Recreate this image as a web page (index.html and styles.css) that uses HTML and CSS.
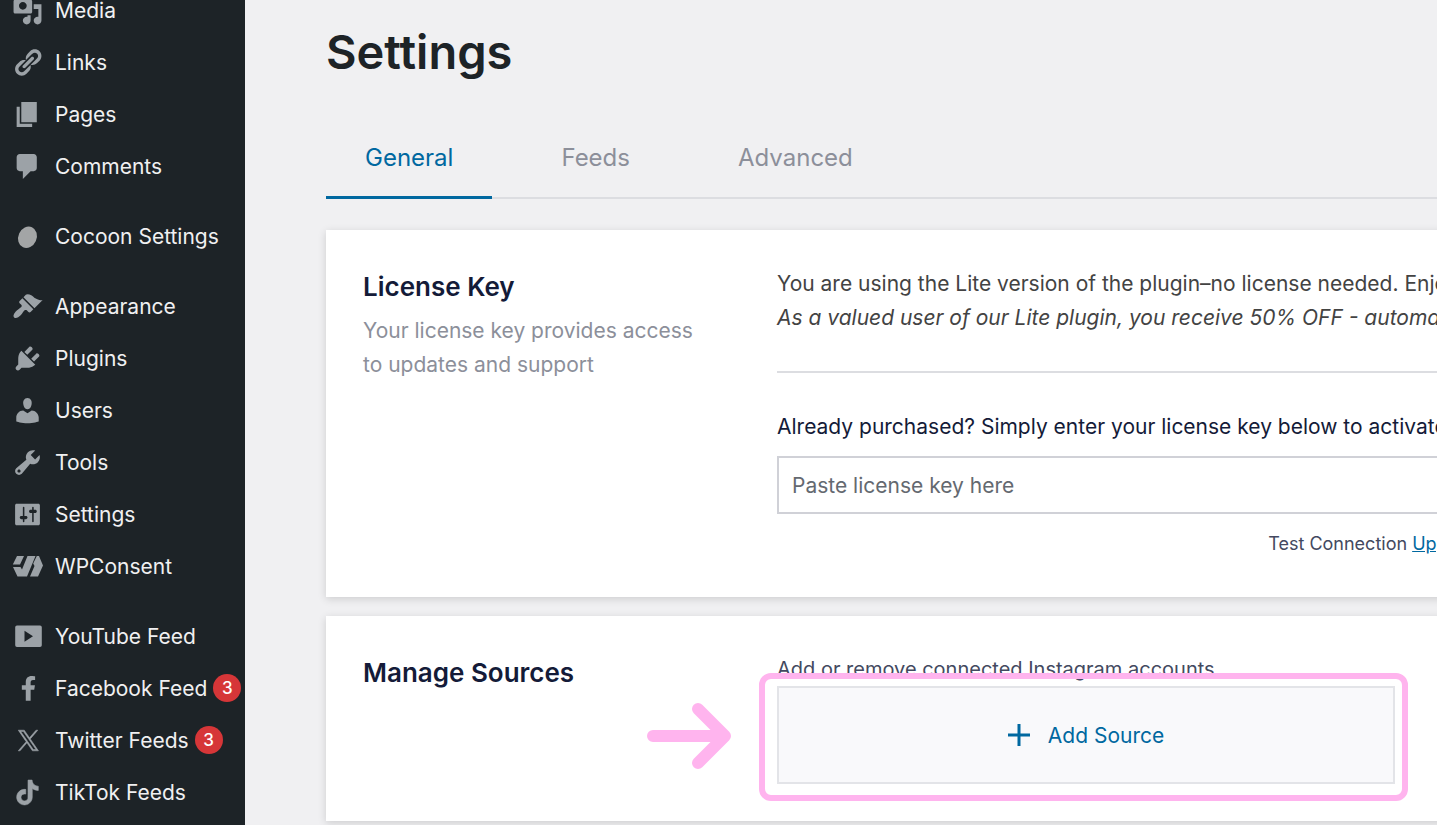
FILE: index.html
```html
<!DOCTYPE html>
<html lang="en">
<head>
    <meta charset="UTF-8">
    <meta name="viewport" content="width=device-width, initial-scale=1.0">
    <title>Settings</title>
    <link rel="stylesheet" href="styles.css">
</head>
<body>
    <nav class="sidebar">
        <ul class="menu">
            <li><a href="#">
                <svg class="icon" viewBox="0 0 20 20"><path d="M13 11V4c0-.55-.45-1-1-1h-1.67L9 1H5L3.67 3H2c-.55 0-1 .45-1 1v7c0 .55.45 1 1 1h10c.55 0 1-.45 1-1zM7 4.5c1.38 0 2.5 1.12 2.5 2.5S8.38 9.5 7 9.5 4.5 8.38 4.5 7 5.62 4.5 7 4.5zM14 6h5v10.5c0 1.38-1.12 2.5-2.5 2.5S14 17.88 14 16.5s1.12-2.5 2.5-2.5c.17 0 .34.02.5.05V9h-3V6zm-4 8.05V13h2v3.5c0 1.38-1.12 2.5-2.5 2.5S7 17.88 7 16.5 8.12 14 9.5 14c.17 0 .34.02.5.05z"/></svg>
                Media</a></li>
            <li><a href="#">
                <svg class="icon" viewBox="0 0 20 20"><path d="M17.74 2.76c1.68 1.69 1.68 4.41 0 6.1l-1.53 1.52c-1.12 1.12-2.7 1.47-4.14 1.09l2.62-2.61.76-.77.76-.76c.84-.84.84-2.2 0-3.04-.84-.85-2.2-.85-3.04 0l-.77.76-3.38 3.38c-.37-1.44-.02-3.02 1.1-4.14l1.52-1.53c1.69-1.68 4.42-1.68 6.1 0zM8.59 13.43l5.34-5.34c.42-.42.42-1.1 0-1.52-.44-.43-1.13-.39-1.53 0l-5.33 5.34c-.42.42-.42 1.1 0 1.52.44.43 1.13.39 1.52 0zm-.76 2.29l4.14-4.15c.38 1.44.03 3.02-1.09 4.14l-1.52 1.53c-1.69 1.68-4.41 1.68-6.1 0-1.68-1.68-1.68-4.42 0-6.1l1.53-1.52c1.12-1.12 2.7-1.47 4.14-1.1l-4.14 4.15c-.85.84-.85 2.2 0 3.05.84.84 2.2.84 3.04 0z"/></svg>
                Links</a></li>
            <li><a href="#">
                <svg class="icon" viewBox="0 0 20 20"><path d="M6 15V2h10v13H6zm-1 1h8v2H3V5h2v11z"/></svg>
                Pages</a></li>
            <li><a href="#">
                <svg class="icon" viewBox="0 0 20 20"><path d="M5 2h9c1.1 0 2 .9 2 2v7c0 1.1-.9 2-2 2h-2l-5 5v-5H5c-1.1 0-2-.9-2-2V4c0-1.1.9-2 2-2z"/></svg>
                Comments</a></li>
            <li class="group"><a href="#">
                <svg class="icon" viewBox="0 0 20 20"><ellipse cx="10" cy="10.5" rx="5.900" ry="7.100" transform="rotate(24 10 10.5)" fill="#a3a5a6"/></svg>
                Cocoon Settings</a></li>
            <li class="group"><a href="#">
                <svg class="icon" viewBox="0 0 20 20"><path d="M14.48 11.06L7.41 3.99l1.5-1.5c.5-.56 2.3-.47 3.51.32 1.21.8 1.43 1.28 2.91 2.1 1.18.64 2.45 1.26 4.45.85zm-.71.71L6.7 4.7 4.93 6.47c-.39.39-.39 1.02 0 1.41l1.06 1.06c.39.39.39 1.03 0 1.42-.6.6-1.43 1.11-2.21 1.69-.35.26-.7.53-1.01.84C1.43 14.23.4 16.08 1.4 17.07c.99 1 2.84-.03 4.18-1.36.31-.31.58-.66.85-1.02.57-.78 1.08-1.61 1.69-2.21.39-.39 1.02-.39 1.41 0l1.06 1.06c.39.39 1.02.39 1.41 0z"/></svg>
                Appearance</a></li>
            <li><a href="#">
                <svg class="icon" viewBox="0 0 20 20"><path d="M13.11 4.36L9.87 7.6 8 5.73l3.24-3.24c.35-.34 1.05-.2 1.56.32.52.51.66 1.21.31 1.55zm-8 1.77l.91-1.12 9.01 9.01-1.19.84c-.71.71-2.63 1.16-3.82 1.16H6.14L4.9 17.26c-.59.59-1.54.59-2.12 0-.59-.58-.59-1.53 0-2.12l1.24-1.24v-3.88c0-1.13.4-3.19 1.09-3.89zm7.26 3.97l3.24-3.24c.34-.35 1.04-.21 1.55.31.52.51.66 1.21.31 1.55l-3.24 3.25z"/></svg>
                Plugins</a></li>
            <li><a href="#">
                <svg class="icon" viewBox="0 0 20 20"><path d="M10 9.25c-2.27 0-2.73-3.44-2.73-3.44C7 4.02 7.82 2 9.97 2c2.16 0 2.98 2.02 2.71 3.81 0 0-.41 3.44-2.68 3.44zm0 2.57L12.72 10c2.39 0 4.52 2.33 4.52 4.53v2.49s-3.65 1.13-7.24 1.13c-3.65 0-7.24-1.13-7.24-1.13v-2.49c0-2.25 1.94-4.48 4.47-4.48z"/></svg>
                Users</a></li>
            <li><a href="#">
                <svg class="icon" viewBox="0 0 20 20"><path d="M16.68 9.77c-1.34 1.34-3.3 1.67-4.95.99l-5.41 6.52c-.99.99-2.59.99-3.58 0s-.99-2.59 0-3.57l6.52-5.42c-.68-1.65-.35-3.61.99-4.95 1.28-1.28 3.12-1.62 4.72-1.06l-2.89 2.89 2.82 2.82 2.86-2.87c.53 1.58.18 3.39-1.08 4.65zM3.81 16.21c.4.39 1.04.39 1.43 0 .4-.4.4-1.04 0-1.43-.39-.4-1.03-.4-1.43 0-.39.39-.39 1.03 0 1.43z"/></svg>
                Tools</a></li>
            <li><a href="#">
                <svg class="icon" viewBox="0 0 20 20"><path d="M18 16V4c0-.55-.45-1-1-1H3c-.55 0-1 .45-1 1v12c0 .55.45 1 1 1h14c.55 0 1-.45 1-1zM8 11h1c.55 0 1 .45 1 1s-.45 1-1 1H8v1.5c0 .28-.22.5-.5.5s-.5-.22-.5-.5V13H6c-.55 0-1-.45-1-1s.45-1 1-1h1V5.5c0-.28.22-.5.5-.5s.5.22.5.5V11zm5-2h-1c-.55 0-1-.45-1-1s.45-1 1-1h1V5.5c0-.28.22-.5.5-.5s.5.22.5.5V7h1c.55 0 1 .45 1 1s-.45 1-1 1h-1v5.5c0 .28-.22.5-.5.5s-.5-.22-.5-.5V9z"/></svg>
                Settings</a></li>
            <li><a href="#">
                <svg class="icon" viewBox="0 0 31 31"><path d="M5 5h7l-4 8.500H.8zM15.500 5h8L15 25.500H5.500L1 16h7.500l1.500 2.500zM24.800 5h2.200l4 9.500-5 11h-8l4.500-10.500-1.300-2.500z"/></svg>
                WPConsent</a></li>
            <li class="group"><a href="#">
                <svg class="icon" viewBox="0 0 31 31"><path fill-rule="evenodd" d="M5 4.500h23a1.800 1.800 0 0 1 1.800 1.800v18a1.800 1.800 0 0 1-1.800 1.800H5a1.800 1.800 0 0 1-1.800-1.800v-18A1.800 1.800 0 0 1 5 4.500zM12.500 9.800v11l8.500-5.500z"/></svg>
                YouTube Feed</a></li>
            <li><a href="#">
                <svg class="icon" viewBox="-180 -60 640 640"><path d="M279.140 288l14.220-92.660h-88.910v-60.130c0-25.350 12.420-50.060 52.240-50.060h40.420V6.260S260.430 0 225.360 0c-73.220 0-121.080 44.380-121.080 124.720v70.620H22.890V288h81.390v224h100.170V288z"/></svg>
                Facebook Feed <span class="badge">3</span></a></li>
            <li><a href="#">
                <svg class="icon" viewBox="-7 -6 36 36"><path stroke="#9ca2a7" stroke-width=".6" d="M14.234 10.162 22.977 0h-2.072l-7.591 8.824L7.251 0H.258l9.168 13.343L.258 24H2.330l8.016-9.318L16.749 24h6.993zm-2.837 3.299-.929-1.329L3.076 1.560h3.182l5.965 8.532.929 1.329 7.754 11.090h-3.182z"/></svg>
                Twitter Feeds <span class="badge">3</span></a></li>
            <li><a href="#">
                <svg class="icon" viewBox="-3 -3 30 30"><path stroke="#9ca2a7" stroke-width=".6" d="M12.525.020c1.310-.020 2.610-.010 3.910-.020.080 1.530.630 3.090 1.750 4.170 1.120 1.110 2.700 1.620 4.240 1.790v4.030c-1.440-.050-2.890-.350-4.200-.970-.570-.260-1.100-.590-1.620-.930-.010 2.920.010 5.840-.020 8.750-.080 1.400-.540 2.790-1.350 3.940-1.310 1.920-3.580 3.170-5.910 3.210-1.430.080-2.860-.310-4.080-1.030-2.020-1.190-3.440-3.370-3.650-5.710-.020-.500-.030-1-.010-1.490.180-1.900 1.120-3.720 2.580-4.960 1.660-1.440 3.980-2.130 6.150-1.720.020 1.480-.040 2.960-.040 4.440-.990-.320-2.150-.230-3.020.370-.630.410-1.110 1.040-1.360 1.750-.210.510-.150 1.070-.140 1.610.240 1.640 1.820 3.020 3.500 2.870 1.120-.010 2.190-.660 2.770-1.610.190-.330.400-.670.410-1.060.100-1.790.060-3.570.070-5.360.010-4.030-.010-8.050.020-12.070z"/></svg>
                TikTok Feeds</a></li>
        </ul>
    </nav>

    <main class="content">
        <h1>Settings</h1>

        <div class="tabs">
            <a class="tab active" href="#">General</a>
            <a class="tab" href="#">Feeds</a>
            <a class="tab" href="#">Advanced</a>
        </div>

        <section class="card">
            <div class="card-head">
                <h2>License Key</h2>
                <p>Your license key provides access to updates and support</p>
            </div>
            <div class="card-body">
                <p class="notice">You are using the Lite version of the plugin–no license needed. Enjoy!<br>
                <em>As a valued user of our Lite plugin, you receive 50% OFF - automatically</em></p>
                <label for="license">Already purchased? Simply enter your license key below to activate</label>
                <input type="text" id="license" placeholder="Paste license key here">
                <div class="license-links">Test Connection <a href="#">Upgrade</a></div>
            </div>
        </section>

        <section class="card">
            <div class="card-head">
                <h2>Manage Sources</h2>
            </div>
            <div class="card-body">
                <p class="hint">Add or remove connected Instagram accounts</p>
                <div class="add-wrap">
                    <button class="add-source" type="button">
                        <svg class="plus" viewBox="0 0 22 22"><path d="M11 0v22M0 11h22"/></svg>
                        Add Source
                    </button>
                    <div class="highlight"></div>
                    <svg class="arrow" viewBox="0 0 84 66"><path d="M6 33h70M51 6l27 27-27 27"/></svg>
                </div>
            </div>
        </section>
    </main>
</body>
</html>
```
FILE: styles.css
```css
* {
    box-sizing: border-box;
}

body {
    margin: 0;
    height: 100vh;
    display: flex;
    overflow: hidden;
    background: #f0f0f2;
    color: #1d2327;
    font-family: Inter, "Liberation Sans", sans-serif;
}

h1, h2, p {
    margin: 0;
}

/* admin menu */
.sidebar {
    flex: none;
    width: 245px;
    background: #1d2327;
}

.menu {
    list-style: none;
    margin: -16px 0 0;
    padding: 0;
}

.menu .group {
    margin-top: 18px;
}

.menu a {
    display: flex;
    align-items: center;
    height: 52px;
    padding-left: 12px;
    color: #f0f0f1;
    font-size: 21px;
    text-decoration: none;
    white-space: nowrap;
}

.icon {
    flex: none;
    width: 31px;
    height: 31px;
    margin-right: 12px;
    fill: #9ca2a7;
}

.badge {
    width: 28px;
    height: 28px;
    margin-left: 6px;
    border-radius: 50%;
    background: #d63638;
    color: #fff;
    font-size: 17px;
    font-weight: 500;
    line-height: 28px;
    text-align: center;
}

/* page */
.content {
    flex: 1;
    min-width: 0;
    padding: 22px 0 0 81px;
    overflow: hidden;
}

h1 {
    font-size: 47px;
    font-weight: 600;
    line-height: 60px;
}

.tabs {
    display: flex;
    gap: 30px;
    margin-top: 36px;
    border-bottom: 2px solid #dcdde1;
}

.tab {
    height: 81px;
    margin-bottom: -2px;
    padding: 0 39px;
    border-bottom: 3px solid transparent;
    color: #8c8f9a;
    font-size: 24px;
    line-height: 80px;
    text-decoration: none;
}

.tab.active {
    border-color: #0068a0;
    color: #0068a0;
}

/* cards run past the right edge of the window */
.card {
    display: flex;
    width: calc(100% + 86px);
    margin-top: 31px;
    padding: 37px;
    background: #fff;
    box-shadow: 0 2px 8px rgba(0, 0, 0, 0.15);
}

.card + .card {
    margin-top: 19px;
}

.card-head {
    flex: none;
    width: 414px;
    padding-right: 60px;
}

h2 {
    color: #141b38;
    font-size: 26px;
    font-weight: 600;
    line-height: 40px;
}

.card-head p {
    margin-top: 7px;
    color: #8c8f9a;
    font-size: 21px;
    line-height: 34px;
}

.card-body {
    flex: 1;
    min-width: 0;
    white-space: nowrap;
}

.notice {
    padding-bottom: 36px;
    border-bottom: 2px solid #dcdde1;
    color: #434343;
    font-size: 21px;
    line-height: 34px;
}

.card-body label {
    display: block;
    margin-top: 37px;
    color: #141b38;
    font-size: 21px;
    line-height: 34px;
}

.card-body input {
    display: block;
    width: 100%;
    height: 58px;
    margin-top: 12px;
    padding: 0 13px;
    border: 2px solid #d0d1d7;
    background: #fff;
    color: #141b38;
    font: inherit;
    font-size: 21px;
}

.card-body input::placeholder {
    color: #646970;
}

.license-links {
    margin-top: 14px;
    color: #434960;
    font-size: 18px;
    line-height: 32px;
    text-align: right;
}

.license-links a {
    color: #0068a0;
}

.hint {
    color: #434960;
    font-size: 20px;
    line-height: 33px;
}

.add-wrap {
    position: relative;
    max-width: 618px;
}

.add-source {
    display: flex;
    align-items: center;
    justify-content: center;
    gap: 18px;
    width: 100%;
    height: 98px;
    border: 2px solid #e3e4e8;
    background: #f9f9fb;
    color: #0068a0;
    font: inherit;
    font-size: 21px;
}

.plus {
    width: 22px;
    height: 22px;
    fill: none;
    stroke: #0068a0;
    stroke-width: 3;
}

.highlight {
    position: absolute;
    inset: -13px -13px -17px -18px;
    border: 6px solid #ffb4ee;
    border-radius: 12px;
    pointer-events: none;
}

.arrow {
    position: absolute;
    top: 17px;
    left: -130px;
    width: 84px;
    height: 66px;
    fill: none;
    stroke: #ffb4ee;
    stroke-width: 12;
    stroke-linecap: round;
    stroke-linejoin: round;
}
```
